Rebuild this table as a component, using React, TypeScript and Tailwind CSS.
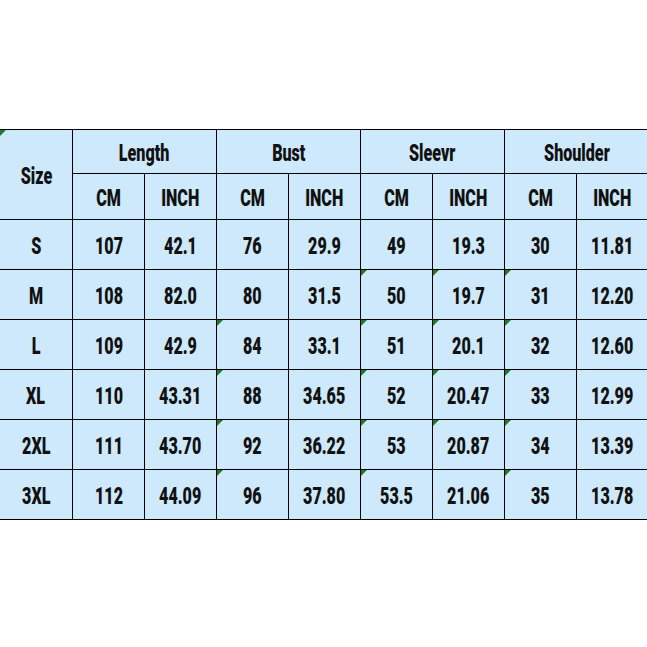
import React from "react";

const rows: { size: string; v: string[]; m: number[] }[] = [
  { size: "S", v: ["107", "42.1", "76", "29.9", "49", "19.3", "30", "11.81"], m: [] },
  { size: "M", v: ["108", "82.0", "80", "31.5", "50", "19.7", "31", "12.20"], m: [4, 5, 6] },
  { size: "L", v: ["109", "42.9", "84", "33.1", "51", "20.1", "32", "12.60"], m: [2, 4, 5, 6] },
  { size: "XL", v: ["110", "43.31", "88", "34.65", "52", "20.47", "33", "12.99"], m: [2, 4, 5, 6] },
  { size: "2XL", v: ["111", "43.70", "92", "36.22", "53", "20.87", "34", "13.39"], m: [2, 4, 5, 6] },
  { size: "3XL", v: ["112", "44.09", "96", "37.80", "53.5", "21.06", "35", "13.78"], m: [2, 4, 6] },
];

function Marker() {
  return (
    <div className="absolute left-0 top-0 w-[6px] h-[6px] bg-[#1f7a2e] [clip-path:polygon(0_0,100%_0,0_100%)]" />
  );
}

function T({ children }: { children: React.ReactNode }) {
  return (
    <span className="inline-block scale-x-[0.7] font-black text-[23px] leading-none text-[#111] [font-family:Roboto,'DejaVu_Sans',sans-serif]">
      {children}
    </span>
  );
}

function Cell({
  children,
  className = "",
  marker = false,
}: {
  children: React.ReactNode;
  className?: string;
  marker?: boolean;
}) {
  return (
    <div className={`relative flex items-center justify-center pt-[3px] bg-[#cde9fb] ${className}`}>
      {marker && <Marker />}
      <T>{children}</T>
    </div>
  );
}

export default function App() {
  const groups = ["Length", "Bust", "Sleevr", "Shoulder"];
  return (
    <div className="w-[647px] h-[647px] overflow-hidden bg-white pt-[129px]">
      <div className="ml-[-1px] w-[650px] bg-black p-px grid gap-px grid-cols-[72px_repeat(8,71px)] grid-rows-[43px_45px_repeat(6,49px)]">
        <Cell className="row-span-2" marker>
          Size
        </Cell>
        {groups.map((g) => (
          <Cell key={g} className="col-span-2">
            {g}
          </Cell>
        ))}
        {groups.map((g) => (
          <React.Fragment key={g + "u"}>
            <Cell>CM</Cell>
            <Cell>INCH</Cell>
          </React.Fragment>
        ))}
        {rows.map((r) => (
          <React.Fragment key={r.size}>
            <Cell>{r.size}</Cell>
            {r.v.map((v, i) => (
              <Cell key={i} marker={r.m.includes(i)}>
                {v}
              </Cell>
            ))}
          </React.Fragment>
        ))}
      </div>
    </div>
  );
}
